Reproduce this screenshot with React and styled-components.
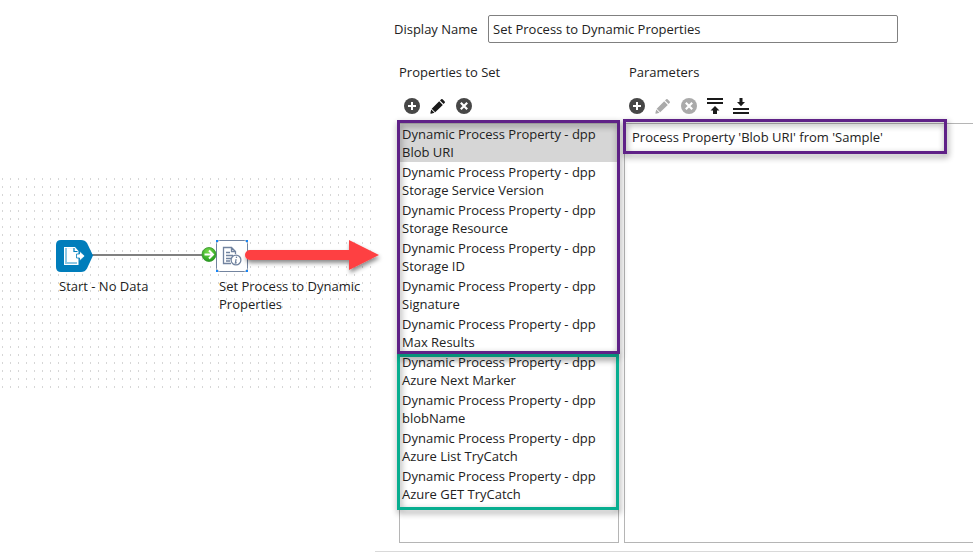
import React from "react";
import styled, { createGlobalStyle } from "styled-components";

const GlobalStyle = createGlobalStyle`
  * { box-sizing: border-box; }
  body {
    margin: 0;
    background: #fff;
    color: #222;
    font: 13px/18px "Open Sans", "Noto Sans", sans-serif;
    overflow: hidden;
  }
`;

const Page = styled.main`
  position: relative;
  display: flex;
  width: 973px;
  height: 552px;
  overflow: hidden;
`;

const CanvasColumn = styled.section`
  flex: 0 0 375px;
  padding-top: 175px;
`;

const Canvas = styled.div`
  position: relative;
  height: 216px;
  background: conic-gradient(from 90deg at 7px 6px, #d6d6d6 90deg, transparent 0) -5px -3px / 8px 8px;
`;

const CanvasSvg = styled.svg`
  position: absolute;
  left: 0;
  top: 0;
  overflow: visible;
`;

const NodeLabel = styled.div`
  position: absolute;
  left: ${(p) => p.$x}px;
  top: ${(p) => p.$y}px;
  width: ${(p) => p.$w}px;
`;

const Editor = styled.section`
  flex: 1;
  min-width: 0;
  display: flex;
  flex-direction: column;
  border-bottom: 1px solid #d9d9d9;
`;

const NameField = styled.label`
  display: flex;
  align-items: center;
  gap: 10px;
  padding: 15px 0 0 19px;
`;

const NameText = styled.span`
  width: 84px;
  white-space: nowrap;
`;

const NameInput = styled.input`
  width: 410px;
  height: 28px;
  padding: 0 4px;
  border: 1px solid #808080;
  border-radius: 2px;
  background: #fff;
  color: #222;
  font: inherit;
  outline: none;
`;

const Columns = styled.div`
  flex: 1;
  display: grid;
  grid-template-columns: 220px 1fr;
  column-gap: 5px;
  padding: 20px 0 8px 24px;
`;

const Column = styled.div`
  display: flex;
  flex-direction: column;
  min-width: 0;
`;

const Heading = styled.div`
  padding-left: ${(p) => p.$indent || 0}px;
`;

const Toolbar = styled.div`
  display: flex;
  align-items: center;
  gap: 10px;
  height: 16px;
  margin: 17px 0 9px;
  padding-left: 5px;
`;

const ToolButton = styled.button`
  display: flex;
  width: 16px;
  height: 16px;
  padding: 0;
  border: 0;
  background: none;
  color: ${(p) => (p.$muted ? "#aaa" : p.$solid ? "#474747" : "#1a1a1a")};
  svg { display: block; flex: none; overflow: visible; }
`;

const List = styled.ul`
  flex: 1;
  margin: 0;
  padding: 0;
  list-style: none;
  border: 1px solid #b5b5b5;
  ${(p) => p.$open && "border-right: 0;"}
`;

const Item = styled.li`
  padding: ${(p) => (p.$single ? "4px 7px" : "1px 2px")};
  background: ${(p) => (p.$selected ? "#d6d6d6" : "transparent")};
  white-space: nowrap;
`;

const Line = styled.div`
  height: 18px;
`;

const Highlight = styled.div`
  position: absolute;
  left: ${(p) => p.$x}px;
  top: ${(p) => p.$y}px;
  width: ${(p) => p.$w}px;
  height: ${(p) => p.$h}px;
  border: 3px solid ${(p) => p.$color};
  filter: drop-shadow(1px 3px 3px rgba(0, 0, 0, 0.45));
  pointer-events: none;
`;

const AddIcon = () => (
  <svg width="16" height="16" viewBox="0 0 16 16">
    <circle cx="8" cy="8" r="8" fill="currentColor" />
    <path d="M8 4v8M4 8h8" stroke="#fff" strokeWidth="2" />
  </svg>
);

const RemoveIcon = () => (
  <svg width="16" height="16" viewBox="0 0 16 16">
    <circle cx="8" cy="8" r="8" fill="currentColor" />
    <path d="M4.800 4.800l6.400 6.400M11.200 4.800l-6.400 6.400" stroke="#fff" strokeWidth="2.200" />
  </svg>
);

const EditIcon = () => (
  <svg width="16" height="16" viewBox="0 0 16 16" fill="currentColor">
    <path d="M9.2 3.3 12.8 6.9 5.2 14.2 1.7 10.7ZM10 2.5l1.2-1.2q.7-.7 1.4 0l2.1 2.1q.7.7 0 1.4L13.6 6ZM1.2 11.4l3.3 3.3L1 15.7q-.7.1-.6-.6Z" />
  </svg>
);

const TopIcon = () => (
  <svg width="16" height="16" viewBox="0 0 16 16" fill="currentColor">
    <path d="M0 0h16v2H0ZM0 4h16v2H0ZM8 8l4.5 4.5H10V16H6v-3.5H3.500Z" />
  </svg>
);

const BottomIcon = () => (
  <svg width="16" height="16" viewBox="0 0 16 16" fill="currentColor">
    <path d="M0 14h16v2H0ZM0 10h16v2H0ZM8 8.300 4 4H6.500V0h3v4H12Z" />
  </svg>
);

const properties = [
  "Blob URI",
  "Storage Service Version",
  "Storage Resource",
  "Storage ID",
  "Signature",
  "Max Results",
  "Azure Next Marker",
  "blobName",
  "Azure List TryCatch",
  "Azure GET TryCatch",
];

const ProcessDrawing = () => (
  <CanvasSvg width="375" height="216" viewBox="0 175 375 216">
    <defs>
      <radialGradient id="port" cx="45%" cy="30%" r="70%">
        <stop offset="0" stopColor="#7bdd4c" />
        <stop offset="1" stopColor="#219b1d" />
      </radialGradient>
      <filter id="arrowShadow" x="-10%" y="-30%" width="120%" height="180%">
        <feDropShadow dx="1" dy="3" stdDeviation="2" floodOpacity="0.45" />
      </filter>
    </defs>
    <path d="M92 255H204" stroke="#808080" strokeWidth="2" />
    <path d="M61 240h20q4 0 6 3l6 12.500L87 268.500q-2 3.500-6 3.500H61q-5 0-5-5v-22q0-5 5-5Z" fill="#007dbb" />
    <path d="M64 247h11l3.500 4V265H64Z" fill="#fff" />
    <path d="M65 248h2v14h10v2H65Z" fill="#8fc8e4" />
    <path d="M67.500 248.500h6v3.500h3.500" fill="none" stroke="#d9edf7" strokeWidth=".6" />
    <path d="M74 248v3.500h3.500" fill="none" stroke="#007dbb" strokeWidth="1.200" />
    <path d="M76.500 254h3v-3l5.500 5-5.500 5v-3h-3Z" fill="#fff" stroke="#007dbb" strokeWidth=".8" />
    <rect x="216.500" y="240.500" width="31" height="31" rx="3" fill="#fff" stroke="#73849f" />
    <path d="M216 240h2v2h-2ZM246 240h2v2h-2ZM216 270h2v2h-2ZM246 270h2v2h-2Z" fill="#1686f7" />
    <g fill="none" stroke="#71839f" strokeWidth="1.300">
      <path d="M231 263.500h-7.500v-16h8l4 4V254M231.500 247.500v4h4" />
      <path d="M226 252.500h4M226 255.500h7M226 258.500h5M226 261h4" />
      <circle cx="236" cy="260" r="4.900" fill="#fff" />
      <path d="M236.600 256.700l-.2 1.300M236.100 259.200l-.7 3.800 1.300-.4" />
    </g>
    <circle cx="209" cy="254.500" r="7" fill="url(#port)" stroke="#35932c" strokeWidth=".8" />
    <path d="M204.500 254.500h8M209 250.500l4 4-4 4" fill="none" stroke="#fff" strokeWidth="2" />
    <path d="M250 250h99v-10l30 15-30 15v-10h-99a5 5 0 0 1 0-10Z" fill="#fe4142" filter="url(#arrowShadow)" />
  </CanvasSvg>
);

export default function App() {
  return (
    <>
      <GlobalStyle />
      <Page>
        <CanvasColumn>
          <Canvas>
            <NodeLabel $x={59} $y={102} $w={100}>Start - No Data</NodeLabel>
            <NodeLabel $x={219} $y={102} $w={150}>Set Process to Dynamic Properties</NodeLabel>
            <ProcessDrawing />
          </Canvas>
        </CanvasColumn>
        <Editor>
          <NameField>
            <NameText>Display Name</NameText>
            <NameInput defaultValue="Set Process to Dynamic Properties" />
          </NameField>
          <Columns>
            <Column>
              <Heading>Properties to Set</Heading>
              <Toolbar>
                <ToolButton $solid aria-label="Add property"><AddIcon /></ToolButton>
                <ToolButton aria-label="Edit property"><EditIcon /></ToolButton>
                <ToolButton $solid aria-label="Remove property"><RemoveIcon /></ToolButton>
              </Toolbar>
              <List>
                {properties.map((name, i) => (
                  <Item key={name} $selected={i === 0}>
                    <Line>Dynamic Process Property - dpp</Line>
                    <Line>{name}</Line>
                  </Item>
                ))}
              </List>
            </Column>
            <Column>
              <Heading $indent={5}>Parameters</Heading>
              <Toolbar>
                <ToolButton $solid aria-label="Add parameter"><AddIcon /></ToolButton>
                <ToolButton $muted aria-label="Edit parameter"><EditIcon /></ToolButton>
                <ToolButton $muted aria-label="Remove parameter"><RemoveIcon /></ToolButton>
                <ToolButton aria-label="Move to top"><TopIcon /></ToolButton>
                <ToolButton aria-label="Move to bottom"><BottomIcon /></ToolButton>
              </Toolbar>
              <List $open>
                <Item $single>
                  <Line>Process Property 'Blob URI' from 'Sample'</Line>
                </Item>
              </List>
            </Column>
          </Columns>
        </Editor>
        <Highlight $x={397} $y={354} $w={222} $h={156} $color="#08ae90" />
        <Highlight $x={397} $y={120} $w={223} $h={234} $color="#5f2187" />
        <Highlight $x={623} $y={119} $w={324} $h={35} $color="#5f2187" />
      </Page>
    </>
  );
}
